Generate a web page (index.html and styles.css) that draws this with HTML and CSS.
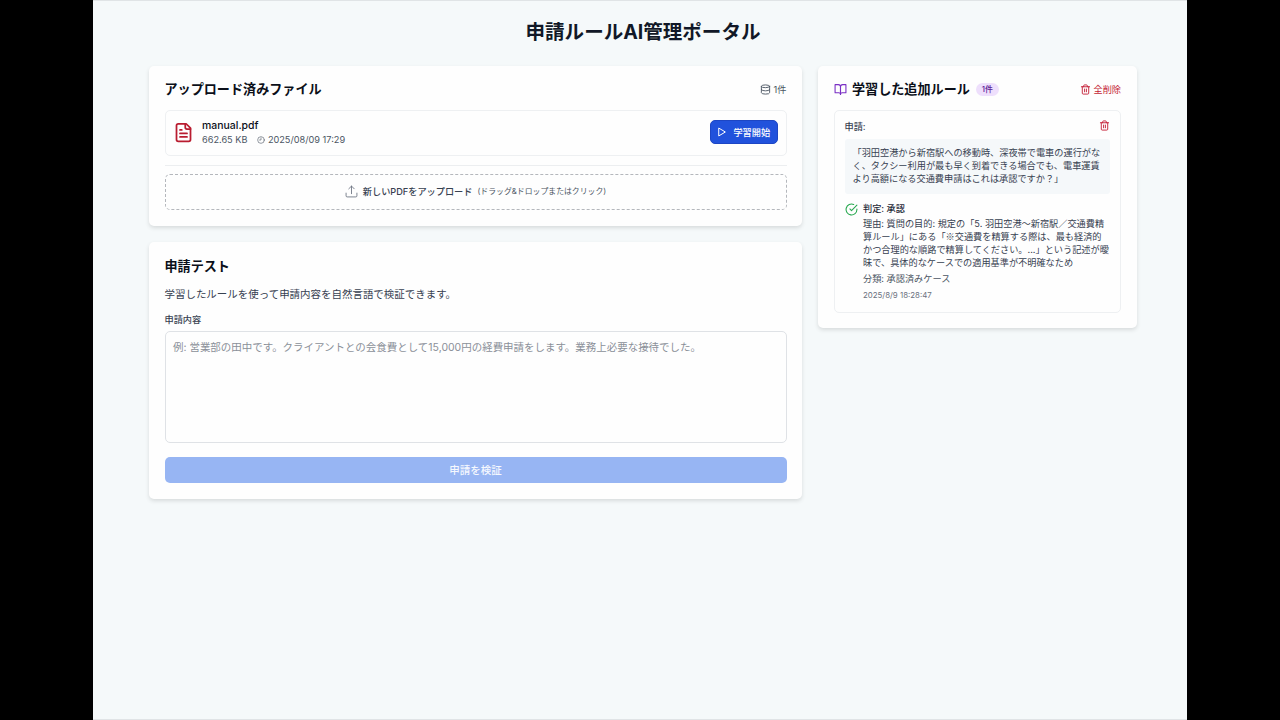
FILE: index.html
```html
<!DOCTYPE html>
<html lang="ja">

<head>
    <meta charset="UTF-8">
    <meta name="viewport" content="width=device-width, initial-scale=1.0">
    <title>申請ルールAI管理ポータル</title>
    <link rel="stylesheet" href="styles.css">
</head>

<body>
    <div class="page">
        <h1>申請ルールAI管理ポータル</h1>

        <main class="layout">
            <div class="left-column">
                <!-- Uploaded files -->
                <section class="card files-card">
                    <div class="card-header">
                        <h2>アップロード済みファイル</h2>
                        <div class="file-count">
                            <svg class="icon icon-count" viewBox="0 0 24 24"><ellipse cx="12" cy="5" rx="9" ry="3"/><path d="M3 5v14a9 3 0 0 0 18 0V5"/><path d="M3 12a9 3 0 0 0 18 0"/></svg>
                            <span>1件</span>
                        </div>
                    </div>

                    <div class="file-row">
                        <svg class="icon icon-file" viewBox="0 0 24 24"><path d="M15 2H6a2 2 0 0 0-2 2v16a2 2 0 0 0 2 2h12a2 2 0 0 0 2-2V7Z"/><path d="M14 2v4a2 2 0 0 0 2 2h4"/><path d="M10 9H8"/><path d="M16 13H8"/><path d="M16 17H8"/></svg>
                        <div class="file-info">
                            <div class="file-name">manual.pdf</div>
                            <div class="file-meta">
                                <span>662.65 KB</span>
                                <span class="file-date">
                                    <svg class="icon icon-clock" viewBox="0 0 24 24"><circle cx="12" cy="12" r="10"/><path d="M12 6v6H7.5"/></svg>
                                    2025/08/09 17:29
                                </span>
                            </div>
                        </div>
                        <button class="learn-btn">
                            <svg class="icon icon-play" viewBox="0 0 24 24"><path d="M5 3l15 9-15 9z"/></svg>
                            <span>学習開始</span>
                        </button>
                    </div>

                    <div class="upload-section">
                        <div class="dropzone">
                            <svg class="icon icon-upload" viewBox="0 0 24 24"><path d="M2 15v5a2 2 0 0 0 2 2h16a2 2 0 0 0 2-2v-5"/><path d="M17 7l-5-5-5 5"/><path d="M12 2v14"/></svg>
                            <span class="dropzone-title">新しいPDFをアップロード</span>
                            <span class="dropzone-hint">(ドラッグ&amp;ドロップまたはクリック)</span>
                        </div>
                    </div>
                </section>

                <!-- Application test -->
                <section class="card test-card">
                    <h2>申請テスト</h2>
                    <p class="description">学習したルールを使って申請内容を自然言語で検証できます。</p>
                    <label for="request">申請内容</label>
                    <textarea id="request" placeholder="例: 営業部の田中です。クライアントとの会食費として15,000円の経費申請をします。業務上必要な接待でした。"></textarea>
                    <button class="verify-btn" disabled>申請を検証</button>
                </section>
            </div>

            <!-- Learned rules -->
            <aside class="card rules-card">
                <div class="card-header">
                    <div class="rules-title">
                        <svg class="icon icon-book" viewBox="0 0 24 24"><path d="M2 3h6a4 4 0 0 1 4 4v14a3 3 0 0 0-3-3H2z"/><path d="M22 3h-6a4 4 0 0 0-4 4v14a3 3 0 0 1 3-3h7z"/></svg>
                        <h2>学習した追加ルール</h2>
                        <span class="badge">1件</span>
                    </div>
                    <div class="delete-all">
                        <svg class="icon icon-trash" viewBox="0 0 24 24"><path d="M3 6h18"/><path d="M19 6v14a2 2 0 0 1-2 2H7a2 2 0 0 1-2-2V6"/><path d="M8 6V4a2 2 0 0 1 2-2h4a2 2 0 0 1 2 2v2"/><path d="M10 11v6"/><path d="M14 11v6"/></svg>
                        <span>全削除</span>
                    </div>
                </div>

                <div class="rule">
                    <div class="rule-header">
                        <span>申請:</span>
                        <svg class="icon icon-trash" viewBox="0 0 24 24"><path d="M3 6h18"/><path d="M19 6v14a2 2 0 0 1-2 2H7a2 2 0 0 1-2-2V6"/><path d="M8 6V4a2 2 0 0 1 2-2h4a2 2 0 0 1 2 2v2"/><path d="M10 11v6"/><path d="M14 11v6"/></svg>
                    </div>
                    <p class="question">「羽田空港から新宿駅への移動時、深夜帯で電車の運行がな<br>く、タクシー利用が最も早く到着できる場合でも、電車運賃<br>より高額になる交通費申請はこれは承認ですか？」</p>
                    <div class="verdict">
                        <svg class="icon icon-check" viewBox="0 0 24 24"><path d="M22 11.08V12a10 10 0 1 1-5.93-9.14"/><path d="M22 4L12 14.01l-3-3"/></svg>
                        <div class="verdict-body">
                            <p class="verdict-title">判定: 承認</p>
                            <p class="reason">理由: 質問の目的: 規定の「5. 羽田空港〜新宿駅／交通費精<br>算ルール」にある「<span class="note-mark">※</span>交通費を精算する際は、最も経済的<br>かつ合理的な順路で精算してください。...」という記述が曖<br>昧で、具体的なケースでの適用基準が不明確なため</p>
                            <p class="category">分類: 承認済みケース</p>
                            <p class="timestamp">2025/8/9 18:28:47</p>
                        </div>
                    </div>
                </div>
            </aside>
        </main>
    </div>
</body>

</html>
```

FILE: styles.css
```css
* {
    box-sizing: border-box;
    margin: 0;
    padding: 0;
}

body {
    background-color: #000;
    font-family: Inter, "Noto Sans CJK JP", sans-serif;
    font-size: 9.19px;
    line-height: 13px;
    color: #374151;
}

button,
textarea {
    font-family: inherit;
}

.page {
    width: 1094px;
    height: 720px;
    margin: 0 auto;
    padding: 19px 50px 0 56px;
    background-color: #f5f9fa;
    border-top: 1px solid #e0e4e6;
    border-bottom: 1px solid #e0e4e6;
}

h1 {
    height: 24px;
    margin-bottom: 22px;
    font-size: 19.55px;
    line-height: 24px;
    font-weight: 700;
    text-align: center;
    color: #111827;
}

h2 {
    font-size: 13.1px;
    line-height: 18px;
    font-weight: 700;
    color: #0b0f19;
    white-space: nowrap;
}

.layout {
    display: grid;
    grid-template-columns: 653px 319px;
    gap: 16px;
    align-items: start;
}

.left-column {
    display: flex;
    flex-direction: column;
    gap: 16px;
}

.card {
    padding: 14px 15.5px 16px;
    background-color: #fefefe;
    border-radius: 5px;
    box-shadow: 0 2px 4px rgba(0, 0, 0, 0.12);
}

.card-header {
    display: flex;
    justify-content: space-between;
    align-items: center;
    height: 18px;
    margin-bottom: 11.5px;
}

.icon {
    flex-shrink: 0;
    fill: none;
    stroke: currentColor;
    stroke-width: 2;
    stroke-linecap: round;
    stroke-linejoin: round;
}

/* Files */
.files-card {
    height: 160px;
}

.file-count {
    display: flex;
    align-items: center;
    gap: 3px;
    color: #4b5563;
}

.icon-count {
    width: 11px;
    height: 11px;
}

.file-row {
    display: flex;
    align-items: center;
    height: 46px;
    padding: 0 7.5px;
    border: 1px solid #eef0f2;
    border-radius: 5px;
}

.icon-file {
    width: 21px;
    height: 21px;
    margin-bottom: 1px;
    color: #b91c30;
}

.file-info {
    flex: 1;
    margin: 0 0 1px 8px;
}

.file-name {
    font-size: 10.48px;
    line-height: 15px;
    font-weight: 500;
    color: #0b0f19;
}

.file-meta {
    display: flex;
    gap: 10px;
    line-height: 13px;
    color: #4b5563;
}

.file-date {
    display: flex;
    align-items: center;
    gap: 2.5px;
}

.icon-clock {
    width: 8px;
    height: 8px;
    stroke-width: 1.8;
}

.learn-btn {
    display: flex;
    align-items: center;
    justify-content: center;
    gap: 6px;
    width: 68.5px;
    height: 24px;
    margin-bottom: 1px;
    border: 1px solid #1d46c4;
    border-radius: 5px;
    background-color: #2152dc;
    color: #fff;
    font-size: 9.19px;
    font-weight: 500;
}

.icon-play {
    width: 10px;
    height: 10px;
    stroke-width: 2.4;
}

.upload-section {
    margin-top: 9px;
    padding-top: 8px;
    border-top: 1px solid #eceef0;
}

.dropzone {
    display: flex;
    align-items: center;
    justify-content: center;
    height: 36px;
    padding-bottom: 1px;
    border: 1px dashed #b4b7bc;
    border-radius: 5px;
}

.icon-upload {
    width: 13px;
    height: 13px;
    margin-right: 5px;
    stroke-width: 1.6;
    color: #6b7280;
}

.dropzone-title {
    margin-right: 5px;
    font-weight: 500;
}

.dropzone-hint {
    font-size: 7.86px;
    color: #4b5563;
}

/* Test form */
.test-card {
    display: flex;
    flex-direction: column;
    height: 257px;
    padding-top: 15px;
}

.description {
    margin-top: 12px;
    font-size: 10.48px;
    line-height: 16px;
}

label {
    margin-top: 10px;
    font-weight: 500;
}

textarea {
    height: 112px;
    margin-top: 5px;
    padding: 8px 7.5px;
    border: 1px solid #dfe2e6;
    border-radius: 5px;
    background-color: #fefefe;
    font-size: 10.48px;
    line-height: 16px;
    resize: none;
}

textarea::placeholder {
    color: #8b9099;
}

.verify-btn {
    height: 26px;
    margin-top: 14.5px;
    padding-bottom: 2px;
    border: none;
    border-radius: 5px;
    background-color: #97b5f3;
    color: #f5f8fe;
    font-size: 10.48px;
    font-weight: 500;
}

/* Rules */
.rules-card {
    height: 262px;
}

.rules-title {
    display: flex;
    align-items: center;
}

.icon-book {
    width: 13px;
    height: 13px;
    margin-right: 5.5px;
    color: #7a2fc4;
}

.badge {
    margin-left: 6px;
    padding: 0 6px;
    border-radius: 7px;
    background-color: #eedffc;
    color: #5b2196;
    font-size: 7.86px;
    font-weight: 500;
}

.delete-all {
    display: flex;
    align-items: center;
    gap: 2.5px;
    margin-right: 0.5px;
    color: #c41c35;
}

.icon-trash {
    width: 11px;
    height: 11px;
    color: #c41c35;
}

.rule {
    height: 203px;
    margin-right: 0.5px;
    padding: 9px 10.5px 0 10px;
    border: 1px solid #eef0f2;
    border-radius: 5px;
}

.rule-header {
    display: flex;
    justify-content: space-between;
    align-items: center;
    height: 13px;
    margin-bottom: 6px;
    font-weight: 500;
}

.rule-header .icon-trash {
    margin-bottom: 1px;
}

.question {
    height: 55px;
    padding: 7px 8px;
    border-radius: 3px;
    background-color: #f5f8fa;
    white-space: nowrap;
}

.verdict {
    display: flex;
    align-items: flex-start;
    margin-top: 8px;
    white-space: nowrap;
}

.icon-check {
    width: 13px;
    height: 13px;
    margin: 1px 5.5px 0 0;
    color: #27a84f;
}

.verdict-title {
    font-weight: 500;
    color: #1f2937;
}

.reason {
    margin-top: 2.5px;
}

/* Inter draws this mark as a small asterisk */
.note-mark {
    font-family: "Noto Sans CJK JP", sans-serif;
    line-height: 1;
}

.category {
    margin-top: 3px;
    color: #4b5563;
}

.timestamp {
    margin-top: 4px;
    font-size: 7.86px;
    color: #6b7280;
}
```
